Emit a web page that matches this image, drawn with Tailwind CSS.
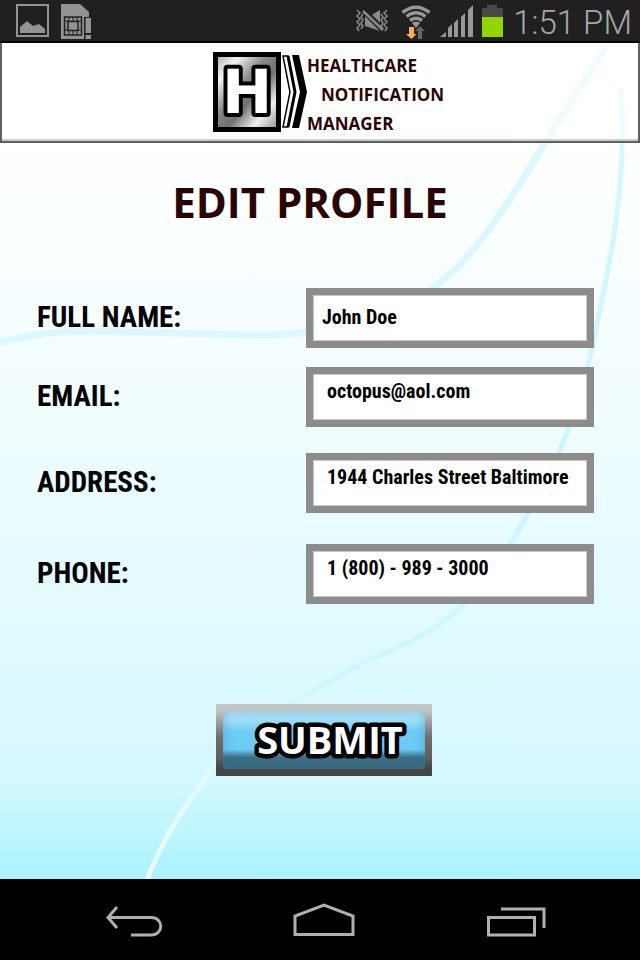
<!DOCTYPE html>
<html lang="en">
<head>
<meta charset="utf-8">
<meta name="viewport" content="width=device-width, initial-scale=1">
<title>Edit Profile</title>
<script src="https://cdn.jsdelivr.net/npm/@tailwindcss/browser@4"></script>
</head>
<body class="flex min-h-screen flex-col bg-black font-['Roboto',sans-serif]">

<div class="flex h-[43px] items-center justify-between border-b-2 border-black bg-[#202020] pl-4 pr-2">
  <div class="flex items-center gap-3">
    <svg class="h-[34px] w-[33px]" viewBox="0 0 33 34" fill="none" role="img" aria-label="Picture saved">
      <rect x="1" y="1" width="31" height="31" stroke="#939393" stroke-width="2"/>
      <path d="M4 29V23L11 17L17 22L23 20L29 25V29Z" fill="#939393"/>
    </svg>
    <svg class="h-[36px] w-[31px]" viewBox="0 0 31 36" fill="none" role="img" aria-label="SIM card alert">
      <path d="M0 1H19L28 9V14H23V36H0Z" fill="#939393"/>
      <rect x="3.500" y="14" width="17" height="18" stroke="#202020" stroke-width="1.500"/>
      <rect x="7" y="18.500" width="10" height="9" stroke="#202020" stroke-width="1.500"/>
      <path d="M8 14V18M12 14V18M16 14V18M8 28V32M12 28V32M16 28V32M4 18H7M17 18H20M4 27H7M17 27H20" stroke="#202020" stroke-width="1"/>
      <path d="M24.500 15H30V30H24.500ZM24.500 32H30V36H24.500Z" fill="#939393"/>
    </svg>
  </div>
  <div class="flex items-center">
    <svg class="mr-[11px] h-6 w-[35px]" viewBox="0 0 35 24" fill="none" role="img" aria-label="Silent">
      <path d="M10 7H15L25 1V22L10 17Z" fill="#8a8a8a"/>
      <path d="M8 1L29 22" stroke="#202020" stroke-width="6"/>
      <path d="M8 2L28 21" stroke="#8a8a8a" stroke-width="2.500"/>
      <path d="M2 1L5 4L2 7L5 10L2 13L5 16L2 19L4 22M8 5L6 8L8 11L6 14L8 17L6 20M32 1L29 4L32 7L29 10L32 13L29 16L32 19L30 22M26 5L28 8L26 11L28 14L26 17L28 20" stroke="#8a8a8a" stroke-width="1.500"/>
    </svg>
    <svg class="mr-[9px] h-[36px] w-[30px]" viewBox="0 0 30 36" fill="none" role="img" aria-label="Wi-Fi">
      <path d="M1.500 9.500Q15 -1 28.500 9.500M5.500 13.500Q15 6 24.500 13.500M9 17.500Q15 13 21 17.500" stroke="#989898" stroke-width="3.500"/>
      <path d="M11 20Q15 17 19 20L15 25Z" fill="#989898"/>
      <path d="M8 24H13V31H15.500L10.500 36L5 31H8Z" fill="#ffad50"/>
      <path d="M17 36V28H14L19 23L24 28H21V36Z" fill="#666"/>
    </svg>
    <svg class="mr-[9px] h-[34px] w-[33px]" viewBox="0 0 33 34" fill="#989898" role="img" aria-label="Signal strength">
      <path d="M0 33L6 28V33ZM8 33V24L12 20V33ZM14 33V19L18 15V33ZM21 33V13L25 9V33ZM28 33V6L33 1V33Z"/>
    </svg>
    <svg class="mr-[10px] h-8 w-[21px]" viewBox="0 0 21 32" role="img" aria-label="Battery">
      <path d="M0 3H5V0H15V3H21V13H0Z" fill="#484848"/>
      <path d="M0 12H21V32H0Z" fill="#93d500"/>
    </svg>
    <time class="pt-1 text-[33px] font-light leading-10 text-[#a8a8a8]">1:51 PM</time>
  </div>
</div>

<main class="relative isolate flex grow flex-col items-center bg-[linear-gradient(180deg,#ffffff_0%,#fdffff_15%,#f2fdff_43%,#e0faff_70%,#d5f8fe_88%,#c3f6fe_93%,#a9f2fe_100%)]">
  <svg class="absolute inset-0 -z-10 h-full w-full" viewBox="0 43 640 836" preserveAspectRatio="none" fill="none" stroke-linecap="round" aria-hidden="true">
    <defs>
      <linearGradient id="trail" gradientUnits="userSpaceOnUse" x1="0" y1="90" x2="0" y2="879">
        <stop offset="0" stop-color="#d9f8ff"/><stop offset=".45" stop-color="#ccf6fe"/><stop offset=".6" stop-color="#cef6fe"/><stop offset=".76" stop-color="#cff7fe"/><stop offset=".86" stop-color="#e2faff"/><stop offset="1" stop-color="#e8fcff"/>
      </linearGradient>
    </defs>
    <path d="M605 48C584 83 566 108 545 143C520 184 492 229 467 257C412 318 350 331 270 335C200 335 100 329 60 332C35 334 15 338 -5 343" stroke="#d9f8ff" stroke-width="7"/>
    <path d="M621 90C628 180 610 265 592 348C577 420 551 478 510 544C455 635 406 641 359 665C315 690 250 723 214 767C184 805 162 840 147 880" stroke="url(#trail)" stroke-width="5"/>
  </svg>

  <header class="flex h-[100px] w-full justify-center border-2 border-t-0 border-[#606060] bg-white/60 pt-2 pl-[14px] shadow-[inset_0_-2px_0_#c8cece]">
    <div class="flex w-[228px]">
      <svg class="h-[82px] w-[94px] shrink-0" viewBox="0 0 94 82" role="img" aria-label="H logo">
        <defs>
          <linearGradient id="steel" x1="0" y1="0" x2="1" y2="1">
            <stop offset="0" stop-color="#aaa"/><stop offset=".2" stop-color="#f4f4f4"/><stop offset=".42" stop-color="#888"/><stop offset=".58" stop-color="#707070"/><stop offset=".78" stop-color="#f0f0f0"/><stop offset="1" stop-color="#888"/>
          </linearGradient>
        </defs>
        <rect x="2.500" y="3.500" width="63" height="75" fill="url(#steel)" stroke="#000" stroke-width="5"/>
        <text x="34" y="62" text-anchor="middle" font-family="DejaVu Sans" font-weight="700" font-size="60" fill="#fff" stroke="#000" stroke-width="8" stroke-linejoin="round" paint-order="stroke">H</text>
        <path d="M70 5H75L82 41L75 76H70L77 41Z" fill="#fff" stroke="#000" stroke-width="1.500"/>
        <path d="M75 5L82 41L75 76" fill="none" stroke="#000" stroke-width="3"/>
        <path d="M79 4H86L94 41L86 77H79L87 41Z"/>
      </svg>
      <p class="flex flex-col font-['Open_Sans',sans-serif] text-[17px] font-bold leading-[29px] text-[#2a0505]">
        <span>HEALTHCARE</span>
        <span class="pl-[14px]">NOTIFICATION</span>
        <span>MANAGER</span>
      </p>
    </div>
  </header>

  <h1 class="mt-[30px] pr-5 font-['Open_Sans',sans-serif] text-[42px] font-bold leading-[58px] text-[#2a0303]">EDIT PROFILE</h1>

  <form class="flex w-full grow flex-col items-center pt-[57px] font-['Roboto_Condensed','Liberation_Sans_Narrow','Roboto',sans-serif] font-bold text-black">
    <div class="flex w-full flex-col pl-[37px] pr-[46px]">
      <div class="flex items-center justify-between">
        <label for="name" class="pb-[2px] text-[29px] leading-8">FULL NAME:</label>
        <input id="name" type="text" value="John Doe" class="h-[60px] w-[288px] border-[7px] border-[#8c8c8c] bg-white pb-[2px] pl-[9px] text-[20px] shadow-[inset_0_0_0_1px_#c8c8c8]">
      </div>
      <div class="mt-[19px] flex items-center justify-between">
        <label for="email" class="pb-[2px] text-[29px] leading-8">EMAIL:</label>
        <input id="email" type="email" value="octopus@aol.com" class="h-[60px] w-[288px] border-[7px] border-[#8c8c8c] bg-white pb-3 pl-[14px] text-[20px] shadow-[inset_0_0_0_1px_#c8c8c8]">
      </div>
      <div class="mt-[26px] flex items-center justify-between">
        <label for="address" class="pb-[2px] text-[29px] leading-8">ADDRESS:</label>
        <input id="address" type="text" value="1944 Charles Street Baltimore" class="h-[60px] w-[288px] border-[7px] border-[#8c8c8c] bg-white pb-3 pl-[14px] text-[20px] shadow-[inset_0_0_0_1px_#c8c8c8]">
      </div>
      <div class="mt-[31px] flex items-center justify-between">
        <label for="phone" class="pb-[2px] text-[29px] leading-8">PHONE:</label>
        <input id="phone" type="tel" value="1 (800) - 989 - 3000" class="h-[60px] w-[288px] border-[7px] border-[#8c8c8c] bg-white pb-3 pl-[14px] text-[20px] shadow-[inset_0_0_0_1px_#c8c8c8]">
      </div>
    </div>
    <div class="mt-[100px] mb-[103px] flex w-full justify-center pl-2">
      <button type="submit" class="h-[72px] w-[216px] bg-[linear-gradient(180deg,#c6c6c6_0%,#c2c2c2_10%,#707070_45%,#606060_75%,#464646_88%,#444444_100%)] p-[7px]">
        <span class="flex h-full items-center justify-center bg-[linear-gradient(180deg,#b8e4f8_0%,#a4dff8_15%,#6fcdf5_35%,#6bcbf5_66%,#3c6f84_80%,#36657a_100%)] shadow-[inset_0_0_12px_#2b7da066]">
          <svg class="h-full w-full" viewBox="0 0 202 58">
            <text x="107" y="43" text-anchor="middle" font-family="Open Sans" font-weight="700" font-size="38" fill="#fff" stroke="#000" stroke-width="9" stroke-linejoin="round" paint-order="stroke">SUBMIT</text>
          </svg>
        </span>
      </button>
    </div>
  </form>
</main>

<nav class="flex h-[81px] items-center justify-between bg-black pl-[105px] pr-[94px]" aria-label="System navigation">
  <button type="button" aria-label="Back">
    <svg class="h-9 w-[58px]" viewBox="0 0 58 36" fill="none" stroke="#b0b0b0" stroke-width="3">
      <path d="M12 5L3 15.500L12 26M3 15.500H46C59 15.500 59 33 46 33H26"/>
    </svg>
  </button>
  <button type="button" aria-label="Home" class="pr-[2px]">
    <svg class="h-9 w-[62px]" viewBox="0 0 62 36" fill="none" stroke="#b0b0b0" stroke-width="3">
      <path d="M2 32.500V14L31 3L60 14V32.500Z"/>
    </svg>
  </button>
  <button type="button" aria-label="Recent apps">
    <svg class="h-9 w-[59px]" viewBox="0 0 59 36" fill="none" stroke="#b0b0b0" stroke-width="3">
      <path d="M1.500 15.500H47.500V33H1.500ZM14 7H57V26"/>
    </svg>
  </button>
</nav>
</body>
</html>
